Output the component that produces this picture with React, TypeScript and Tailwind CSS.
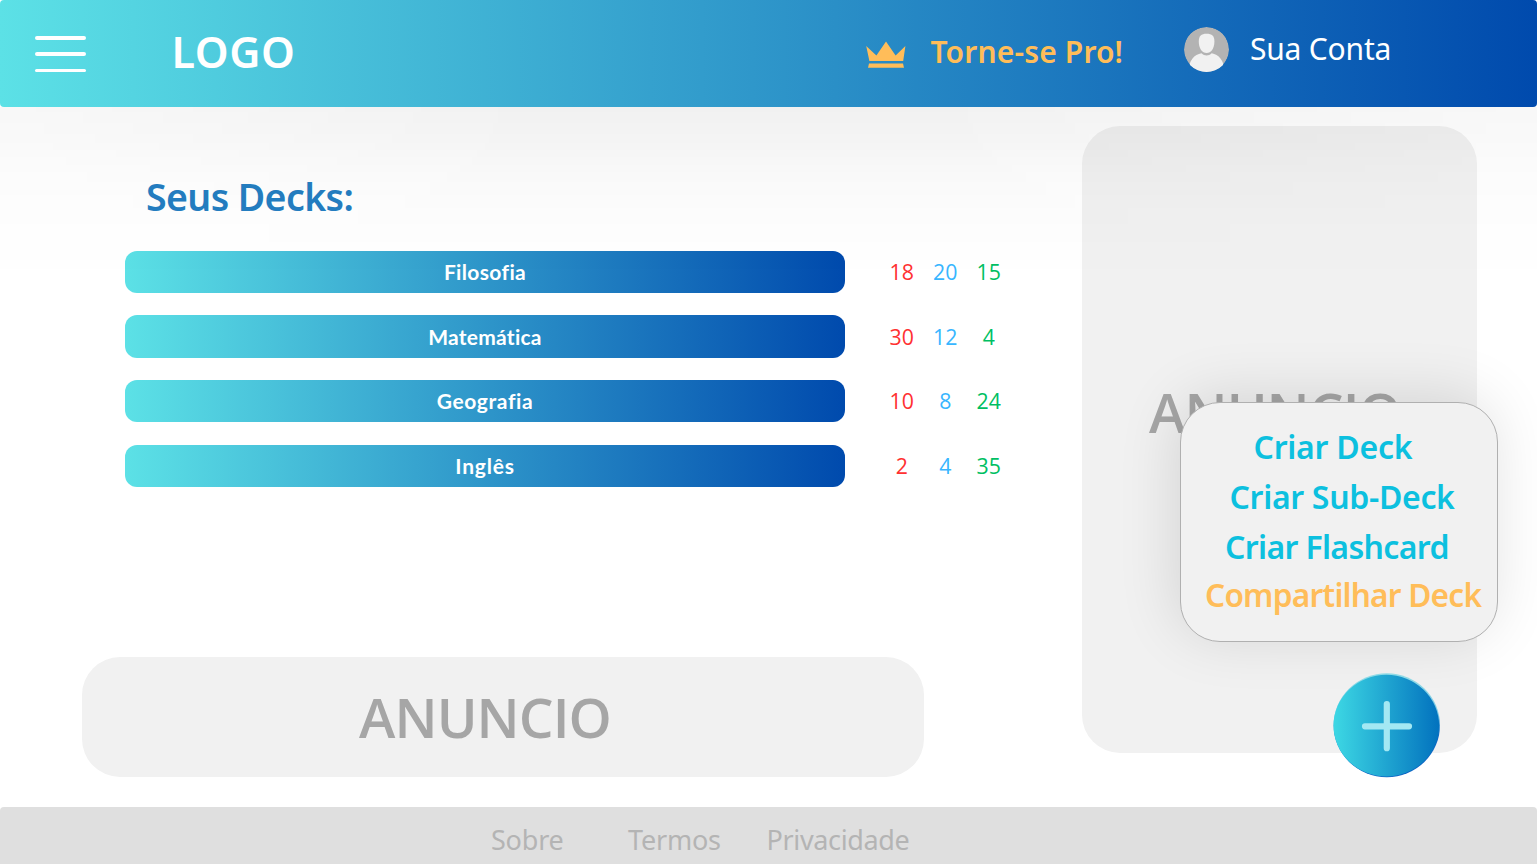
type Deck = { name: string; tracking: string; counts: [number, number, number] };

const decks: Deck[] = [
  { name: "Filosofia", tracking: "tracking-[0.35px]", counts: [18, 20, 15] },
  { name: "Matemática", tracking: "tracking-[0.25px]", counts: [30, 12, 4] },
  { name: "Geografia", tracking: "tracking-[0.6px]", counts: [10, 8, 24] },
  { name: "Inglês", tracking: "tracking-[0.8px]", counts: [2, 4, 35] },
];

const actions = [
  { label: "Criar Deck", style: "pl-[72.5px] tracking-[-0.25px] text-[#0cc0df]" },
  { label: "Criar Sub-Deck", style: "mt-[18.5px] pl-[48.5px] tracking-[-0.32px] text-[#0cc0df]" },
  { label: "Criar Flashcard", style: "mt-[18px] pl-[44px] tracking-[-0.65px] text-[#0cc0df]" },
  { label: "Compartilhar Deck", style: "mt-[16px] pl-[24px] text-[31.6px] tracking-[-0.77px] text-[#ffbd59]" },
];

function Header() {
  return (
    <header className="relative z-10 flex h-[107px] items-start rounded-[4px] bg-[linear-gradient(90deg,#5ce1e6,#004aad)] pl-[35px] leading-none whitespace-nowrap">
      <button aria-label="Menu" className="mt-[36px] flex w-[51px] flex-col gap-[12.7px]">
        <span className="h-[3.7px] w-full rounded-full bg-white" />
        <span className="h-[3.7px] w-full rounded-full bg-white" />
        <span className="h-[3.7px] w-full rounded-full bg-white" />
      </button>
      <div className="mt-[30px] ml-[85.5px] w-[128.5px] text-[43px] font-semibold tracking-[0.6px] text-white">LOGO</div>
      <svg className="mt-[41px] ml-[566px] h-[28px] w-[40px]" viewBox="0 0 40 28" fill="#ffbd59">
        <path d="M0.2 5 L10.4 14.4 L20 0.6 L29.6 14.4 L39.4 5 L37.2 20 H3.4 Z" />
        <path d="M3 22.6 H37 L38 26.8 H2 Z" />
      </svg>
      <div className="mt-[37px] ml-[24.5px] w-[200px] text-[30px] font-semibold tracking-[0.15px] text-[#ffbd59]">Torne-se Pro!</div>
      <svg className="mt-[27px] ml-[53.5px] size-[45px]" viewBox="0 0 45 45">
        <defs>
          <clipPath id="avatar">
            <circle cx="22.5" cy="22.5" r="22.5" />
          </clipPath>
        </defs>
        <g clipPath="url(#avatar)">
          <circle cx="22.5" cy="22.5" r="22.5" fill="#b3b3b3" />
          <path d="M4.5 45 C4.5 33 10.5 27.5 17.5 26.2 C20.5 29.2 24.7 29.2 27.7 26.2 C34.5 27.5 40.5 33 40.5 45 Z" fill="#f1f1f1" />
          <path d="M22.6 6.8 C28 6.8 30.4 9 30.4 14.5 C30.4 21.5 27 26 22.6 26 C18.2 26 14.8 21.5 14.8 14.5 C14.8 9 17.2 6.8 22.6 6.8 Z" fill="#f1f1f1" />
        </g>
      </svg>
      <div className="mt-[34px] ml-[21px] text-[30px] font-normal tracking-[-0.2px] text-white">Sua Conta</div>
    </header>
  );
}

function DeckRow({ deck }: { deck: Deck }) {
  const [fresh, learning, review] = deck.counts;
  return (
    <li className="flex h-[42.3px] items-center">
      <button className={"flex h-full w-[720px] items-center justify-center rounded-[12px] bg-[linear-gradient(90deg,#5ce1e6,#004aad)] font-['Lato',sans-serif] text-[21px] font-bold text-white " + deck.tracking}>
        {deck.name}
      </button>
      <div className="ml-[35px] grid grid-cols-[repeat(3,43.5px)] text-center font-['Open_Sans',sans-serif] text-[21.3px]">
        <span className="text-[#ff3131]">{fresh}</span>
        <span className="text-[#38b6ff]">{learning}</span>
        <span className="text-[#00bf63]">{review}</span>
      </div>
    </li>
  );
}

function ActionMenu() {
  return (
    <div className="absolute top-[401.5px] left-[1180px] flex h-[240px] w-[318px] flex-col rounded-[40px] border border-[#b0b0b0] bg-[#f1f1f1] pt-[28px] text-[32px] leading-[32px] font-semibold whitespace-nowrap shadow-[-4px_-6px_60px_rgba(0,0,0,0.12)]">
      {actions.map((a) => (
        <button key={a.label} className={"text-left " + a.style}>
          {a.label}
        </button>
      ))}
    </div>
  );
}

function AddButton() {
  return (
    <button aria-label="Adicionar" className="absolute top-[673px] left-[1333px]">
      <svg className="h-[105px] w-[108px]" viewBox="0 0 108 105">
        <defs>
          <linearGradient id="face" x1="0" x2="1">
            <stop offset="0" stopColor="#3dd8e4" />
            <stop offset="1" stopColor="#0272be" />
          </linearGradient>
          <linearGradient id="rim" x1="0" x2="0" y1="0" y2="1">
            <stop offset="0" stopColor="#8fdbe6" />
            <stop offset="0.4" stopColor="#7fcbe4" />
            <stop offset="0.6" stopColor="#0b66c4" />
            <stop offset="1" stopColor="#0b62c4" />
          </linearGradient>
        </defs>
        <ellipse cx="53.8" cy="52.2" rx="53.2" ry="52" fill="url(#rim)" />
        <ellipse cx="53.3" cy="52.6" rx="52.8" ry="50.8" fill="url(#face)" />
        <path d="M32 53.3 H76 M53.8 31 V75.2" stroke="#a3e8f3" strokeWidth="6.2" strokeLinecap="round" />
      </svg>
    </button>
  );
}

export default function App() {
  return (
    <div className="relative flex h-[864px] w-[1537px] flex-col overflow-hidden bg-white font-['Noto_Sans',sans-serif]">
      <Header />
      <main className="flex h-[700px] items-start">
        <section className="ml-[81.5px] flex w-[1000.5px] flex-col pt-[71px]">
          <h1 className="pl-[64.5px] text-[37.5px] leading-[38px] font-semibold tracking-[-0.6px] text-[#247ec2]">Seus Decks:</h1>
          <ul className="mt-[34.7px] flex flex-col gap-[22.4px] pl-[43.5px]">
            {decks.map((d) => (
              <DeckRow key={d.name} deck={d} />
            ))}
          </ul>
          <aside className="mt-[169.8px] flex h-[120px] w-[842px] items-center rounded-[38px] bg-[#f1f1f1] pl-[277.5px] font-['Open_Sans',sans-serif] text-[55px] font-semibold tracking-[-0.9px] text-[#a6a6a6]">
            ANUNCIO
          </aside>
        </section>
        <aside className="mt-[19px] h-[627px] w-[395px] rounded-[38px] bg-[#f1f1f1] pt-[258px] pl-[67px] font-['Open_Sans',sans-serif] text-[55px] leading-[55px] font-semibold tracking-[-0.9px] text-[#a6a6a6]">
          ANUNCIO
        </aside>
      </main>
      <footer className="flex h-[57px] items-start rounded-t-[4px] bg-[#dfdfdf] pt-[18.5px] pl-[491px] text-[27px] leading-[28px] font-normal text-[#b4b4b4]">
        <a className="w-[137px] tracking-[-0.2px]">Sobre</a>
        <a className="w-[138.5px] tracking-[-0.2px]">Termos</a>
        <a className="tracking-[-0.35px]">Privacidade</a>
      </footer>
      <div className="pointer-events-none absolute inset-x-0 top-[107px] h-[180px] bg-[linear-gradient(180deg,rgba(0,0,0,0.056),rgba(0,0,0,0.042)_18%,rgba(0,0,0,0.024)_38%,rgba(0,0,0,0.01)_60%,rgba(0,0,0,0.003)_80%,transparent)] [mask-image:linear-gradient(90deg,rgba(0,0,0,0.5),#000_35%,#000_60%,rgba(0,0,0,0.5))]" />
      <ActionMenu />
      <AddButton />
    </div>
  );
}
